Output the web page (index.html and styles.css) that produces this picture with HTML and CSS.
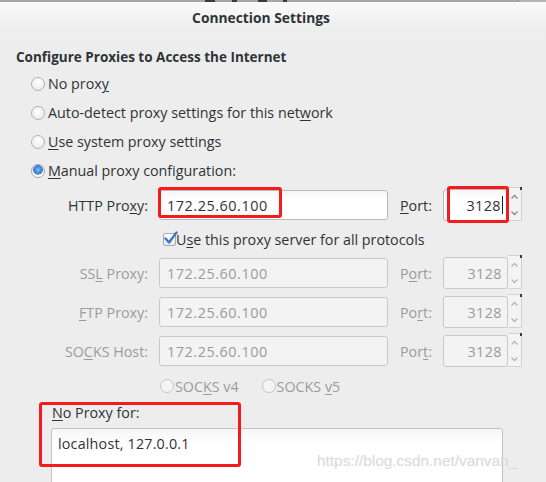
FILE: index.html
```html
<!DOCTYPE html>
<html>
<head>
<meta charset="utf-8">
<link rel="stylesheet" href="styles.css">
</head>
<body>
<div class="window">
  <div class="strip">
    <span class="bit b1"></span><span class="bit b2"></span><span class="bit b3"></span><span class="bit b4"></span>
    <span class="strip-end"></span>
  </div>
  <header class="titlebar">Connection Settings</header>
  <main class="content">
    <h1 class="heading">Configure Proxies to Access the Internet</h1>
    <div class="radios">
      <div class="radio-row"><span class="radio"></span><span>No prox<u>y</u></span></div>
      <div class="radio-row"><span class="radio"></span><span>Auto-detect proxy settings for this net<u>w</u>ork</span></div>
      <div class="radio-row"><span class="radio"></span><span><u>U</u>se system proxy settings</span></div>
      <div class="radio-row"><span class="radio checked"></span><span><u>M</u>anual proxy configuration:</span></div>
    </div>

    <div class="proxy-grid">
      <span class="lbl">HTTP Pro<u>x</u>y:</span>
      <div class="field">172.25.60.100</div>
      <span class="plbl"><u>P</u>ort:</span>
      <div class="port">3128<span class="caret"></span></div>
      <div class="spin"><svg width="13" height="33" viewBox="0 0 13 33"><path d="M3.5 10.5 L6.5 7.5 L9.5 10.5" fill="none" stroke="#8a8a8a" stroke-width="1.3"/><path d="M3.5 23.5 L6.5 26.5 L9.5 23.5" fill="none" stroke="#8a8a8a" stroke-width="1.3"/></svg></div>

      <div class="check-row"><span class="checkbox"><svg width="16" height="15" viewBox="0 0 16 15"><path d="M2.5 7.5 L6 11.5 L13.5 1.5" fill="none" stroke="#3d78c7" stroke-width="2.4" stroke-linecap="round" stroke-linejoin="round"/></svg></span><span>U<u>s</u>e this proxy server for all protocols</span></div>

      <span class="lbl dis">SS<u>L</u> Proxy:</span>
      <div class="field dis">172.25.60.100</div>
      <span class="plbl dis">P<u>o</u>rt:</span>
      <div class="port dis">3128</div>
      <div class="spin dis"><svg width="13" height="33" viewBox="0 0 13 33"><path d="M3.5 10.5 L6.5 7.5 L9.5 10.5" fill="none" stroke="#b4b4b4" stroke-width="1.3"/><path d="M3.5 23.5 L6.5 26.5 L9.5 23.5" fill="none" stroke="#b4b4b4" stroke-width="1.3"/></svg></div>

      <span class="lbl dis"><u>F</u>TP Proxy:</span>
      <div class="field dis">172.25.60.100</div>
      <span class="plbl dis">Po<u>r</u>t:</span>
      <div class="port dis">3128</div>
      <div class="spin dis"><svg width="13" height="33" viewBox="0 0 13 33"><path d="M3.5 10.5 L6.5 7.5 L9.5 10.5" fill="none" stroke="#b4b4b4" stroke-width="1.3"/><path d="M3.5 23.5 L6.5 26.5 L9.5 23.5" fill="none" stroke="#b4b4b4" stroke-width="1.3"/></svg></div>

      <span class="lbl dis">SO<u>C</u>KS Host:</span>
      <div class="field dis">172.25.60.100</div>
      <span class="plbl dis">Por<u>t</u>:</span>
      <div class="port dis">3128</div>
      <div class="spin dis"><svg width="13" height="33" viewBox="0 0 13 33"><path d="M3.5 10.5 L6.5 7.5 L9.5 10.5" fill="none" stroke="#b4b4b4" stroke-width="1.3"/><path d="M3.5 23.5 L6.5 26.5 L9.5 23.5" fill="none" stroke="#b4b4b4" stroke-width="1.3"/></svg></div>
    </div>

    <div class="socks-ver">
      <div class="radio-row dis"><span class="radio"></span><span>SOC<u>K</u>S v4</span></div>
      <div class="radio-row dis"><span class="radio checked-dis"></span><span>SOCKS <u>v</u>5</span></div>
    </div>

    <div class="noproxy">
      <div class="np-label"><u>N</u>o Proxy for:</div>
      <div class="np-area">localhost, 127.0.0.1</div>
    </div>
  </main>

  <div class="mark mark-http"></div>
  <div class="mark mark-port"></div>
  <div class="mark mark-np"></div>
  <div class="watermark">https://blog.csdn.net/vanvan_</div>
</div>
</body>
</html>
```

FILE: styles.css
```css
* { box-sizing: border-box; }
html, body { margin: 0; padding: 0; }
body {
  width: 546px;
  height: 482px;
  overflow: hidden;
  background: #ededed;
  font-family: "Open Sans", "DejaVu Sans", sans-serif;
  font-size: 14.3px;
  color: #2e3436;
}
.window { position: relative; width: 546px; height: 482px; overflow: hidden; }
u { text-decoration: underline; text-underline-offset: 2px; text-decoration-thickness: 1px; }

.strip { height: 2px; background: #a6a6a6; display: flex; }
.bit { height: 2px; background: #3a3a3a; }
.b1 { margin-left: 205px; width: 10px; }
.b2 { margin-left: 17px; width: 5px; }
.b3 { margin-left: 21px; width: 9px; }
.b4 { margin-left: 16px; width: 4px; }
.strip-end { margin-left: auto; width: 28px; background: #b4b4b4; border-left: 1px solid #8c8c8c; }

.titlebar {
  height: 33px;
  display: flex;
  align-items: center;
  justify-content: center;
  padding: 0 24px 3px 0;
  font-weight: bold;
  font-size: 13.8px;
  background: linear-gradient(#fafafa, #f1f1f1 60%, #ededed);
}

.content { padding: 0 16px; }
.heading {
  margin: 12px 0 0;
  height: 20px;
  line-height: 20px;
  font-size: 13.5px;
  font-weight: bold;
}

.radios { margin-top: 2px; padding-left: 15px; }
.radio-row { height: 29px; display: flex; align-items: center; gap: 3px; }
.radio {
  width: 14px; height: 14px;
  border-radius: 50%;
  border: 1px solid #b0b0b0;
  background: radial-gradient(circle at 50% 35%, #ffffff, #e6e6e6);
  flex: none;
}
.radio.checked {
  border-color: #9aa7b5;
  background: radial-gradient(circle at 50% 40%, #8ec0f5 0, #4f90e0 2.5px, #3a78cc 4.5px, #e6ebf0 5px, #ffffff 6.5px);
}
.radio.checked-dis {
  border-color: #c4c4c4;
  background: radial-gradient(circle, #a8a8a8 0, #a8a8a8 3.5px, #f0f0f0 4.5px, #f6f6f6);
}

.proxy-grid {
  margin-top: 5px;
  display: grid;
  grid-template-columns: 143px 241px 43px 65px 14px;
  grid-template-rows: 30px 20px 30px 30px 31px;
  row-gap: 9px;
}
.lbl { padding-right: 11px; text-align: right; align-self: center; white-space: nowrap; }
.plbl { align-self: center; }
.dis { color: #9a9c9c; }
.field {
  width: 229px;
  height: 30px;
  border: 1px solid #b9b9b9;
  border-radius: 3px;
  background: linear-gradient(#f6f6f6, #ffffff 30%);
  padding-left: 7px;
  display: flex;
  align-items: center;
  font-size: 14.4px;
  letter-spacing: 0.55px;
}
.field.dis { background: #f3f3f3; border-color: #c9c9c9; }
.port {
  height: 32px;
  margin-top: -1px;
  border: 1px solid #b9b9b9;
  border-radius: 3px;
  background: linear-gradient(#f6f6f6, #ffffff 30%);
  display: flex;
  align-items: center;
  justify-content: flex-end;
  padding-right: 4px;
  font-size: 14.4px;
  letter-spacing: 0.4px;
  position: relative;
}
.port.dis { background: #f3f3f3; border-color: #c9c9c9; padding-right: 5px; }
.caret { width: 1px; height: 18px; background: #222; margin-left: 1px; }
.spin {
  height: 34px;
  margin-top: -3px;
  width: 14px;
  border: 1px solid #d2d2d2;
  border-left: none;
  background: #f4f4f4;
  position: relative;
}
.spin svg { display: block; }
.spin::after {
  content: "";
  position: absolute;
  top: -1px; right: -1px;
  width: 2px; height: 3px;
  background: #3a3a3a;
}
.check-row {
  grid-column: 2 / span 4;
  display: flex;
  align-items: center;
  padding-left: 4px;
}
.checkbox {
  width: 13px; height: 13px;
  border: 1px solid #a9a9a9;
  border-radius: 2px;
  background: linear-gradient(#ffffff, #e9e9e9);
  position: relative;
  flex: none;
}
.checkbox svg { position: absolute; left: -1px; top: -3px; }

.socks-ver { margin-top: 9px; display: flex; gap: 23px; padding-left: 144px; }
.socks-ver .radio-row { height: 20px; gap: 1px; }
.socks-ver .radio { border-color: #c4c4c4; background: #f4f4f4; }

.noproxy { margin-top: 8px; padding-left: 35px; }
.np-label { height: 18px; line-height: 18px; padding-left: 1px; }
.np-area {
  margin-top: 6px;
  width: 452px;
  height: 80px;
  border: 1px solid #c2c2c2;
  border-radius: 3px;
  background: linear-gradient(#f6f6f6, #ffffff 20%);
  padding: 5px 6px;
  font-size: 14.3px;
  letter-spacing: 0.2px;
}

.mark {
  position: absolute;
  border: 3px solid #f21c1c;
  border-radius: 3px;
}
.mark-http { left: 158px; top: 187px; width: 124px; height: 31px; }
.mark-port { left: 447px; top: 186px; width: 62px; height: 37px; }
.mark-np { left: 39px; top: 402px; width: 202px; height: 65px; }

.watermark {
  position: absolute;
  left: 317px;
  top: 452px;
  font-family: "Liberation Sans", Arial, sans-serif;
  font-size: 15.4px;
  color: #dcdcdc;
  text-shadow: 0 0 1px rgba(0,0,0,0.08);
}
```
